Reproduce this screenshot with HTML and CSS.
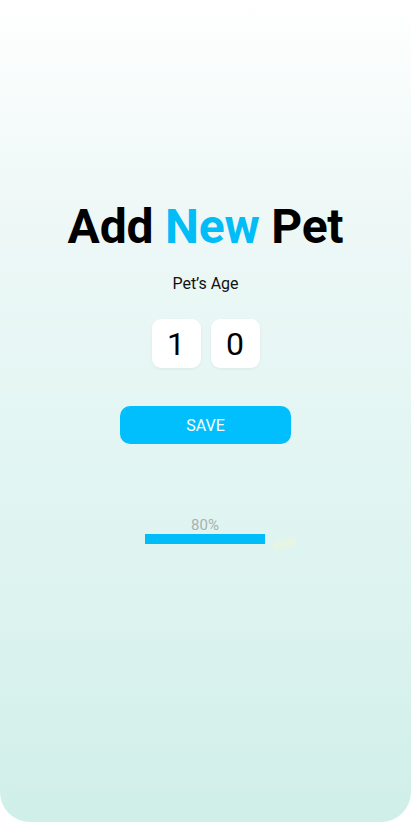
FILE: index.html
```html
<!DOCTYPE html>
<html>
<head>
<meta charset="utf-8">
<link rel="stylesheet" href="styles.css">
</head>
<body>
<div class="screen">
  <h1 class="title">Add <span class="accent">New</span> Pet</h1>
  <p class="label">Pet’s Age</p>
  <div class="digits">
    <div class="digit">1</div>
    <div class="digit">0</div>
  </div>
  <button class="save">SAVE</button>
  <div class="progress">
    <div class="pct">80%</div>
    <div class="track">
      <div class="bar" style="width:120px"></div>
      <div class="blob"></div>
    </div>
  </div>
</div>
</body>
</html>
```
FILE: styles.css
```css
html, body {
  margin: 0;
  padding: 0;
  background: #ffffff;
}
body {
  width: 411px;
  height: 823px;
  overflow: hidden;
  font-family: Roboto, "Liberation Sans", sans-serif;
}
.screen {
  box-sizing: border-box;
  width: 411px;
  height: 822px;
  border-radius: 30px;
  background: linear-gradient(180deg, #ffffff 0%, #eef8f7 25%, #e4f6f3 50%, #dcf3ef 75%, #d0efe9 100%);
  display: flex;
  flex-direction: column;
  align-items: center;
  padding-top: 197px;
}
.title {
  margin: 0;
  font-size: 48px;
  font-weight: 700;
  line-height: 60px;
  color: #000;
  letter-spacing: -0.2px;
}
.accent {
  color: #00bcf7;
}
.label {
  margin: 17px 0 0;
  font-size: 16px;
  line-height: 20px;
  color: #111;
}
.digits {
  display: flex;
  gap: 10px;
  margin-top: 25px;
}
.digit {
  width: 49px;
  height: 49px;
  border-radius: 9px;
  background: #fff;
  box-shadow: 0 1px 3px rgba(0,0,0,0.06);
  display: flex;
  align-items: center;
  justify-content: center;
  font-size: 32px;
  color: #000;
}
.save {
  margin-top: 38px;
  width: 171px;
  height: 38px;
  border: none;
  border-radius: 10px;
  background: #00bffc;
  color: #fff;
  font-family: Roboto, "Liberation Sans", sans-serif;
  font-size: 16px;
  padding: 0;
}
.progress {
  margin-top: 72px;
  width: 120px;
  display: flex;
  flex-direction: column;
  align-items: center;
  margin-left: -1px;
}
.pct {
  font-size: 15px;
  line-height: 18px;
  color: #aab0ae;
}
.track {
  position: relative;
  width: 120px;
  height: 10px;
  align-self: flex-start;
}
.bar {
  height: 10px;
  background: #00bdf9;
}
.blob {
  position: absolute;
  left: 127px;
  top: 6px;
  width: 25px;
  height: 8px;
  border-radius: 5px;
  background: #e7f5e3;
  filter: blur(1px);
  transform: rotate(-14deg);
}
```
